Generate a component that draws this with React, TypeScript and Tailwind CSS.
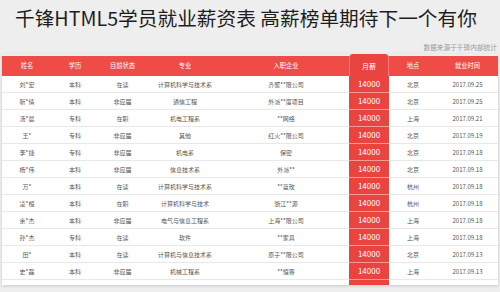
const HEADERS = ["姓名", "学历", "目前状态", "专业", "入职企业", "月薪", "地点", "就业时间"];

const ROWS: string[][] = [
    ["刘*宏", "本科", "在读", "计算机科学与技术系", "齐聚**限公司", "14000", "北京", "2017.09.25"],
    ["靳*倩", "本科", "非应届", "通信工程", "外派**度项目", "14000", "北京", "2017.09.25"],
    ["汤*晨", "专科", "在职", "机电工程系", "**网络", "14000", "上海", "2017.09.21"],
    ["王*", "专科", "非应届", "其他", "红火**限公司", "14000", "北京", "2017.09.19"],
    ["李*捷", "专科", "非应届", "机电系", "保密", "14000", "北京", "2017.09.18"],
    ["杨*伟", "本科", "非应届", "信息技术系", "外派**", "14000", "北京", "2017.09.18"],
    ["万*", "本科", "在读", "计算机科学与技术系", "**蓝玫", "14000", "杭州", "2017.09.18"],
    ["凌*桓", "本科", "在职", "计算机科学与技术", "浙江**源", "14000", "杭州", "2017.09.18"],
    ["余*杰", "本科", "非应届", "电气与信息工程系", "上海**限公司", "14000", "上海", "2017.09.18"],
    ["孙*杰", "专科", "在读", "软件", "**家具", "14000", "上海", "2017.09.18"],
    ["田*", "本科", "在读", "计算机与信息技术系", "原子**限公司", "14000", "北京", "2017.09.13"],
    ["史*磊", "本科", "非应届", "机械工程系", "**恒寄", "14000", "上海", "2017.09.13"],
];

const GRID = "grid grid-cols-[50px_46px_49px_76px_126px_40px_48px_61px]";

function HeaderRow() {
    return (
        <div className={`${GRID} items-end h-[22px]`}>
            {HEADERS.map((h, i) =>
                i === 5 ? (
                    <div key={h} className="h-[22px] rounded-t-[4px] bg-[#ea4440] border-x border-[#f27c78] flex items-center justify-center pt-[2px] text-[7px] text-white">
                        {h}
                    </div>
                ) : (
                    <div key={h} className="h-[20px] bg-[#ef4b47] flex items-center justify-center text-[6.3px] text-white">
                        {h}
                    </div>
                )
            )}
        </div>
    );
}

function DataRow({ row }: { row: string[] }) {
    return (
        <div className={`${GRID} h-[17px]`}>
            {row.map((cell, i) =>
                i === 5 ? (
                    <div key={i} className="bg-[#ea4440] border-b border-[#f59b98] flex items-center justify-center text-[8px] text-white">
                        {cell}
                    </div>
                ) : (
                    <div key={i} className="border-b border-[#e8e8e8] flex items-center justify-center text-[6px] text-[#555] whitespace-nowrap">
                        {cell}
                    </div>
                )
            )}
        </div>
    );
}

export default function App() {
    return (
        <div className="w-[500px] h-[292px] overflow-hidden bg-[#eeeeee] pt-[4px] font-['Noto_Sans_CJK_SC','Noto_Sans',sans-serif]">
            <div className="px-[15px] text-[19.7px] leading-[27px] text-[#1e1e1e] whitespace-nowrap">
                千锋HTML5学员就业薪资表 高薪榜单期待下一个有你
            </div>
            <div className="mt-[11px] pr-[3px] text-right text-[6.7px] leading-[10px] text-[#9a9a9a]">
                数据来源于千锋内部统计
            </div>
            <div className="mt-[2px] mx-[2px] w-[496px] shadow-[0_1px_3px_rgba(0,0,0,0.15)]">
                <HeaderRow />
                <div className="bg-white">
                    {ROWS.map((r, i) => (
                        <DataRow key={i} row={r} />
                    ))}
                    <div className={`${GRID} h-[5px]`}>
                        <div className="col-start-6 bg-[#ea4440]" />
                    </div>
                </div>
            </div>
        </div>
    );
}
